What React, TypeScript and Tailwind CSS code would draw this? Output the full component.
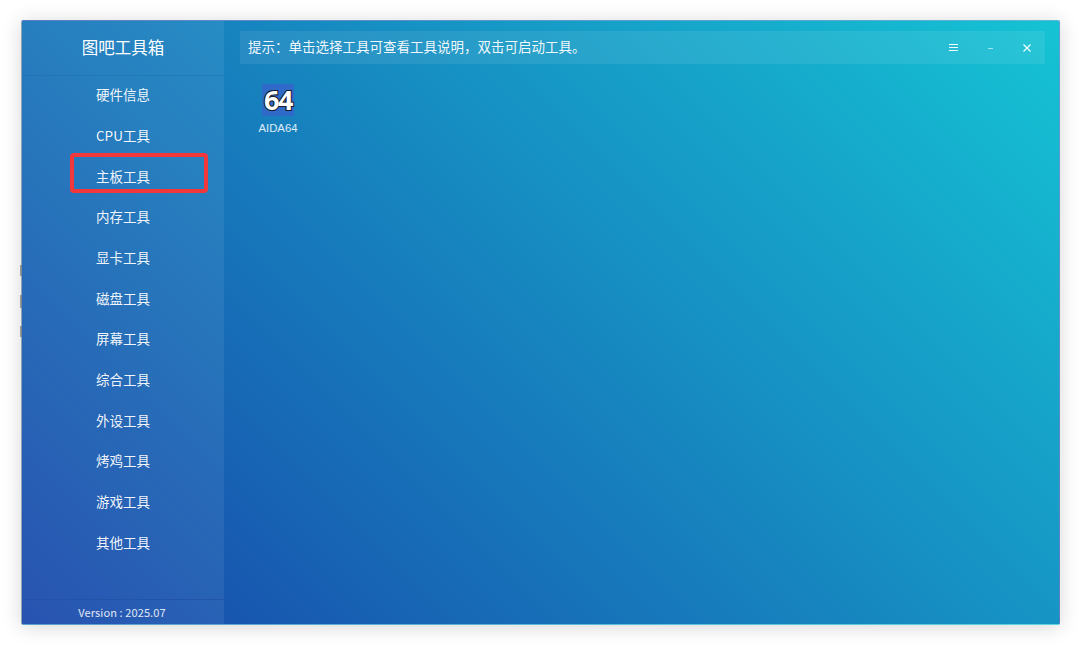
const menuItems = [
  "硬件信息",
  "CPU工具",
  "主板工具",
  "内存工具",
  "显卡工具",
  "磁盘工具",
  "屏幕工具",
  "综合工具",
  "外设工具",
  "烤鸡工具",
  "游戏工具",
  "其他工具",
];

function AidaIcon() {
  return (
    <div className="flex h-8 w-8 items-center justify-center bg-[#2f6ac8] pb-[1px] font-['Open_Sans',sans-serif] text-[27px] leading-8 font-bold tracking-[-1.5px] text-white [-webkit-text-stroke:2.2px_#161c28] [paint-order:stroke_fill]">
      64
    </div>
  );
}

export default function App() {
  return (
    <div className="h-[645px] w-[1080px] bg-white pt-5 pl-[21px] font-['Noto_Sans_CJK_SC','Noto_Sans',sans-serif]">
      <div className="flex h-[605px] w-[1039px] overflow-hidden rounded-[2px] border border-white/30 border-l-[#8fa3b5] bg-[linear-gradient(45deg,#1846aa,#15c3d4)] text-white shadow-[0_2px_20px_rgba(0,0,0,0.16)]">
        {/* sidebar */}
        <div className="flex w-[202px] shrink-0 flex-col bg-white/[0.07]">
          <div className="flex h-[55px] shrink-0 items-center justify-center border-b border-[#1f6fb0]/50 pb-[2px] text-[16.5px]">
            图吧工具箱
          </div>
          <div className="-mt-[2px] flex-1">
            {menuItems.map((item) => (
              <div key={item} className="flex h-[40.7px] items-center pl-[74px] text-[13.5px] text-white/95">
                {item}
              </div>
            ))}
          </div>
          <div className="flex h-[25px] shrink-0 items-center justify-center border-t border-[#1f4f9f]/60 pr-[2px] text-[11px] tracking-[0.1px] text-white/85">
            Version : 2025.07
          </div>
        </div>

        {/* main */}
        <div className="flex-1 pt-[10px] pr-[14px] pl-4">
          <div className="flex h-[33px] items-center justify-between bg-white/[0.08] pb-[3px] pl-2 text-[13.5px] text-white/95">
            <span>提示：单击选择工具可查看工具说明，双击可启动工具。</span>
            <div className="flex items-center gap-[30px] pt-[3px] pr-[14px]">
              <svg width="9" height="7" viewBox="0 0 9 7" stroke="currentColor" strokeWidth="1">
                <path d="M0 .5h9M0 3.5h9M0 6.5h9" />
              </svg>
              <svg width="5" height="7" viewBox="0 0 5 7" stroke="currentColor" strokeWidth="1" opacity="0.6">
                <path d="M0 4.5h5" />
              </svg>
              <svg width="8" height="8" viewBox="0 0 8 8" stroke="currentColor" strokeWidth="1.2">
                <path d="M.5.5l7 7M7.5.5l-7 7" />
              </svg>
            </div>
          </div>
          <div className="mt-5 flex w-[76px] flex-col items-center">
            <AidaIcon />
            <div className="mt-[4px] font-['Liberation_Sans',sans-serif] text-[11.3px] leading-4 text-white/85">AIDA64</div>
          </div>
        </div>
      </div>

      {/* annotation and stray marks over the screenshot */}
      <div className="absolute top-[153px] left-[70px] h-[40px] w-[138px] rounded-[4px] border-4 border-[#f2383a]" />
      <span className="absolute top-[265px] left-[20px] h-[11px] w-[2px] bg-[#777]/70" />
      <span className="absolute top-[295px] left-[20px] h-[13px] w-[2px] bg-[#777]/70" />
      <span className="absolute top-[326px] left-[20px] h-[11px] w-[2px] bg-[#777]/70" />
    </div>
  );
}
